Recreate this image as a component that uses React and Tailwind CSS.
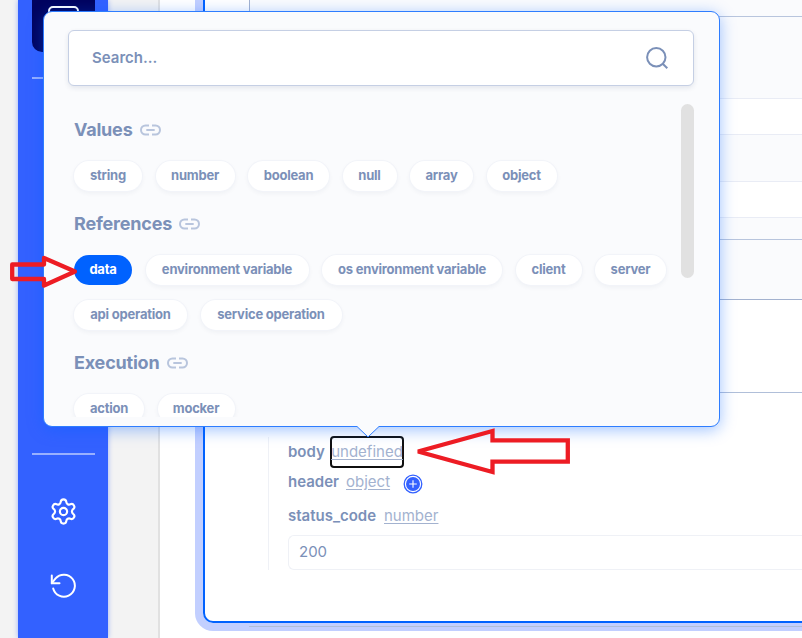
import React from "react";
import { Settings } from "lucide-react";

const groups = [
  {
    title: "Values",
    titleWidth: "w-[59px]",
    rows: [
      [
        ["string", "w-[68px]"],
        ["number", "w-[79px]"],
        ["boolean", "w-[81px]"],
        ["null", "w-[54px]"],
        ["array", "w-[63px]"],
        ["object", "w-[70px]"],
      ],
    ],
  },
  {
    title: "References",
    titleWidth: "w-[98px]",
    rows: [
      [
        ["data", "w-[58px]"],
        ["environment variable", "w-[163px]"],
        ["os environment variable", "w-[180px]"],
        ["client", "w-[66px]"],
        ["server", "w-[71px]"],
      ],
      [
        ["api operation", "w-[113px]"],
        ["service operation", "w-[141px]"],
      ],
    ],
  },
  {
    title: "Execution",
    titleWidth: "w-[86px]",
    rows: [
      [
        ["action", "w-[70px]"],
        ["mocker", "w-[77px]"],
      ],
    ],
  },
];

function LinkIcon() {
  return (
    <svg className="mt-[1px] h-[12px] w-[21px]" viewBox="0 0 21 12" fill="none" stroke="#b8c5dd" strokeWidth="2">
      <path d="M9 1.5H5.5a4.5 4.5 0 0 0 0 9H9M12 1.5h3.5a4.5 4.5 0 0 1 0 9H12M6.3 6h8.4" />
    </svg>
  );
}

function Pill({ label, width }) {
  const active = label === "data";
  return (
    <span
      className={`flex h-[30px] shrink-0 items-center justify-center rounded-full text-[13px] font-bold tracking-[-0.22px] whitespace-nowrap ${width} ${
        active
          ? "bg-[#0062ff] text-white"
          : "bg-white text-[#7b90b8] shadow-[0_0_0_1px_#f2f4f9,0_2px_5px_rgba(30,50,90,0.06)]"
      }`}
    >
      {label}
    </span>
  );
}

function Group({ group }) {
  return (
    <section className="flex flex-col">
      <h2 className="flex h-[24px] items-center gap-[7px] text-[18px] font-bold tracking-[-0.2px] text-[#7b90b8]">
        <span className={`whitespace-nowrap ${group.titleWidth}`}>{group.title}</span>
        <LinkIcon />
      </h2>
      <div className="mt-[20px] flex flex-col gap-[15px]">
        {group.rows.map((row) => (
          <div key={row[0][0]} className="flex gap-[13.5px]">
            {row.map(([label, width]) => (
              <Pill key={label} label={label} width={width} />
            ))}
          </div>
        ))}
      </div>
    </section>
  );
}

function Popover() {
  return (
    <div className="absolute top-[11px] left-[43px] h-[416px] w-[677px] rounded-[9px] border border-[#2e7dff] bg-[#fafbfd] pt-[18px] pl-[24px] shadow-[0_3px_16px_rgba(0,98,255,0.38)]">
      <div className="flex h-[56px] w-[626px] items-center justify-between rounded-[6px] border border-[#c5cfe4] bg-white pr-[24px] pl-[23px] shadow-[0_2px_5px_rgba(30,50,90,0.1)]">
        <span className="text-[15px] font-semibold text-[#7b90b8]">Search...</span>
        <svg className="h-[24px] w-[24px]" viewBox="0 0 24 24" fill="none" stroke="#7b90b8" strokeWidth="2">
          <circle cx="11.3" cy="11.3" r="9.2" />
          <path d="M17.7 17.7l4.6 4.6" />
        </svg>
      </div>
      <div className="mt-[18px] flex h-[313px] w-[626px] justify-between">
        <div className="-ml-[4px] flex w-[605px] flex-col gap-[20px] overflow-hidden pt-[13px] pl-[10px]">
          {groups.map((g) => (
            <Group key={g.title} group={g} />
          ))}
        </div>
        <div className="h-[174px] w-[13px] rounded-full bg-[#e1e1e1]" />
      </div>
      <svg className="absolute top-[413px] left-[312px] h-[13px] w-[24px]" viewBox="0 0 24 13">
        <path d="M1 1.5L12 12L23 1.5V0H1Z" fill="#fafbfd" />
        <path d="M1 1.5L12 12L23 1.5" fill="none" stroke="#2e7dff" />
      </svg>
    </div>
  );
}

function Sidebar() {
  return (
    <aside className="z-10 flex w-[90px] shrink-0 flex-col items-center bg-[#3361ff] shadow-[0_0_5px_rgba(51,97,255,0.45)]">
      <div className="flex h-[52px] w-[63px] justify-center rounded-b-[10px] bg-[#01035f] pt-[6px]">
        <div className="h-[30px] w-[31px] rounded-[5px] border-2 border-white" />
      </div>
      <div className="mt-[25px] h-[2px] w-[63px] bg-[#99b0ff]" />
      <div className="mt-[374px] h-[2px] w-[63px] bg-[#99b0ff]" />
      <Settings className="mt-[41.5px] text-white" size={29} strokeWidth={1.8} />
      <svg
        className="mt-[46px] h-[28px] w-[28px]"
        viewBox="0 0 28 28"
        fill="none"
        stroke="white"
        strokeWidth="2"
        strokeLinecap="round"
        strokeLinejoin="round"
      >
        <path d="M2.8 3.5v7.7h7.7" />
        <path d="M4.2 16.4a11 11 0 1 0 2.4-10L2.8 11.2" />
      </svg>
    </aside>
  );
}

function Details() {
  return (
    <div className="mt-[44px] ml-[19px] flex h-[133px] flex-col border-l border-[#eff1f6] pl-[19px] text-[15px] text-[#7b90b8]">
      <div className="flex h-[30px] items-center">
        <span className="w-[42px] font-semibold">body</span>
        <span className="flex h-[32px] w-[74px] items-center justify-center rounded-[4px] border-2 border-[#101010] text-[#a3b2cf] underline underline-offset-2">
          undefined
        </span>
      </div>
      <div className="flex h-[30px] items-center">
        <span className="w-[58px] font-semibold">header</span>
        <span className="w-[57px] text-[#a3b2cf] underline underline-offset-2">object</span>
        <svg className="mt-[3px] h-[20px] w-[20px]" viewBox="0 0 20 20" fill="none">
          <circle cx="10" cy="10" r="8.8" stroke="#3361ff" strokeWidth="1.3" />
          <circle cx="10" cy="10" r="7" fill="#3361ff" />
          <path d="M10 6.2v7.6M6.2 10h7.6" stroke="white" strokeWidth="1.1" />
        </svg>
      </div>
      <div className="flex h-[38px] items-center">
        <span className="w-[96px] font-semibold">status_code</span>
        <span className="text-[#a3b2cf] underline underline-offset-2">number</span>
      </div>
      <div className="flex h-[35px] items-center rounded-l-[6px] border border-r-0 border-[#eff1f6] pl-[10px]">200</div>
    </div>
  );
}

function Main() {
  return (
    <main className="flex min-w-0 flex-1 flex-col overflow-hidden border-l-2 border-[#e1e1e1] bg-white pl-[43px]">
      <div className="h-[623px] shrink-0 rounded-bl-[10px] border-b-2 border-l-2 border-[#0062ff] pl-[44px] shadow-[0_0_0_8px_#c2cfff]">
        <div className="h-[300px] border-b border-l border-[#a3b2cf] bg-[#fafbfd]">
          <div className="h-[17px] border-b border-[#b8c5dd]" />
          <div className="mt-[81px] h-[37px] border-y border-[#e9ecf5] bg-white" />
          <div className="mt-[46px] h-[37px] border-y border-[#e9ecf5] bg-white" />
          <div className="h-[22px] border-b border-[#b8c5dd]" />
        </div>
        <div className="h-[93px] border-b border-[#b0bfd9]" />
        <div className="h-[190px] border-b border-[#b0bfd9]">
          <Details />
        </div>
      </div>
    </main>
  );
}

export default function App() {
  return (
    <div className="relative flex h-[638px] w-[802px] overflow-hidden bg-[#f3f3f3] pl-[18px] font-['Inter',sans-serif]">
      <Sidebar />
      <div className="w-[50px] shrink-0" />
      <Main />
      <div className="absolute inset-0 z-20">
        <Popover />
        <svg className="absolute inset-0 h-[638px] w-[802px]" fill="none" stroke="#ed1c24" strokeWidth="4.3">
          <path d="M12.2 264.5H44V258L75 271.5L44 285.5V279H12.2Z" strokeLinejoin="round" />
          <path d="M418 451.5L492.5 431V440.3H567.8V461.7H492.5V472Z" strokeLinejoin="miter" strokeMiterlimit="2" />
        </svg>
      </div>
    </div>
  );
}
